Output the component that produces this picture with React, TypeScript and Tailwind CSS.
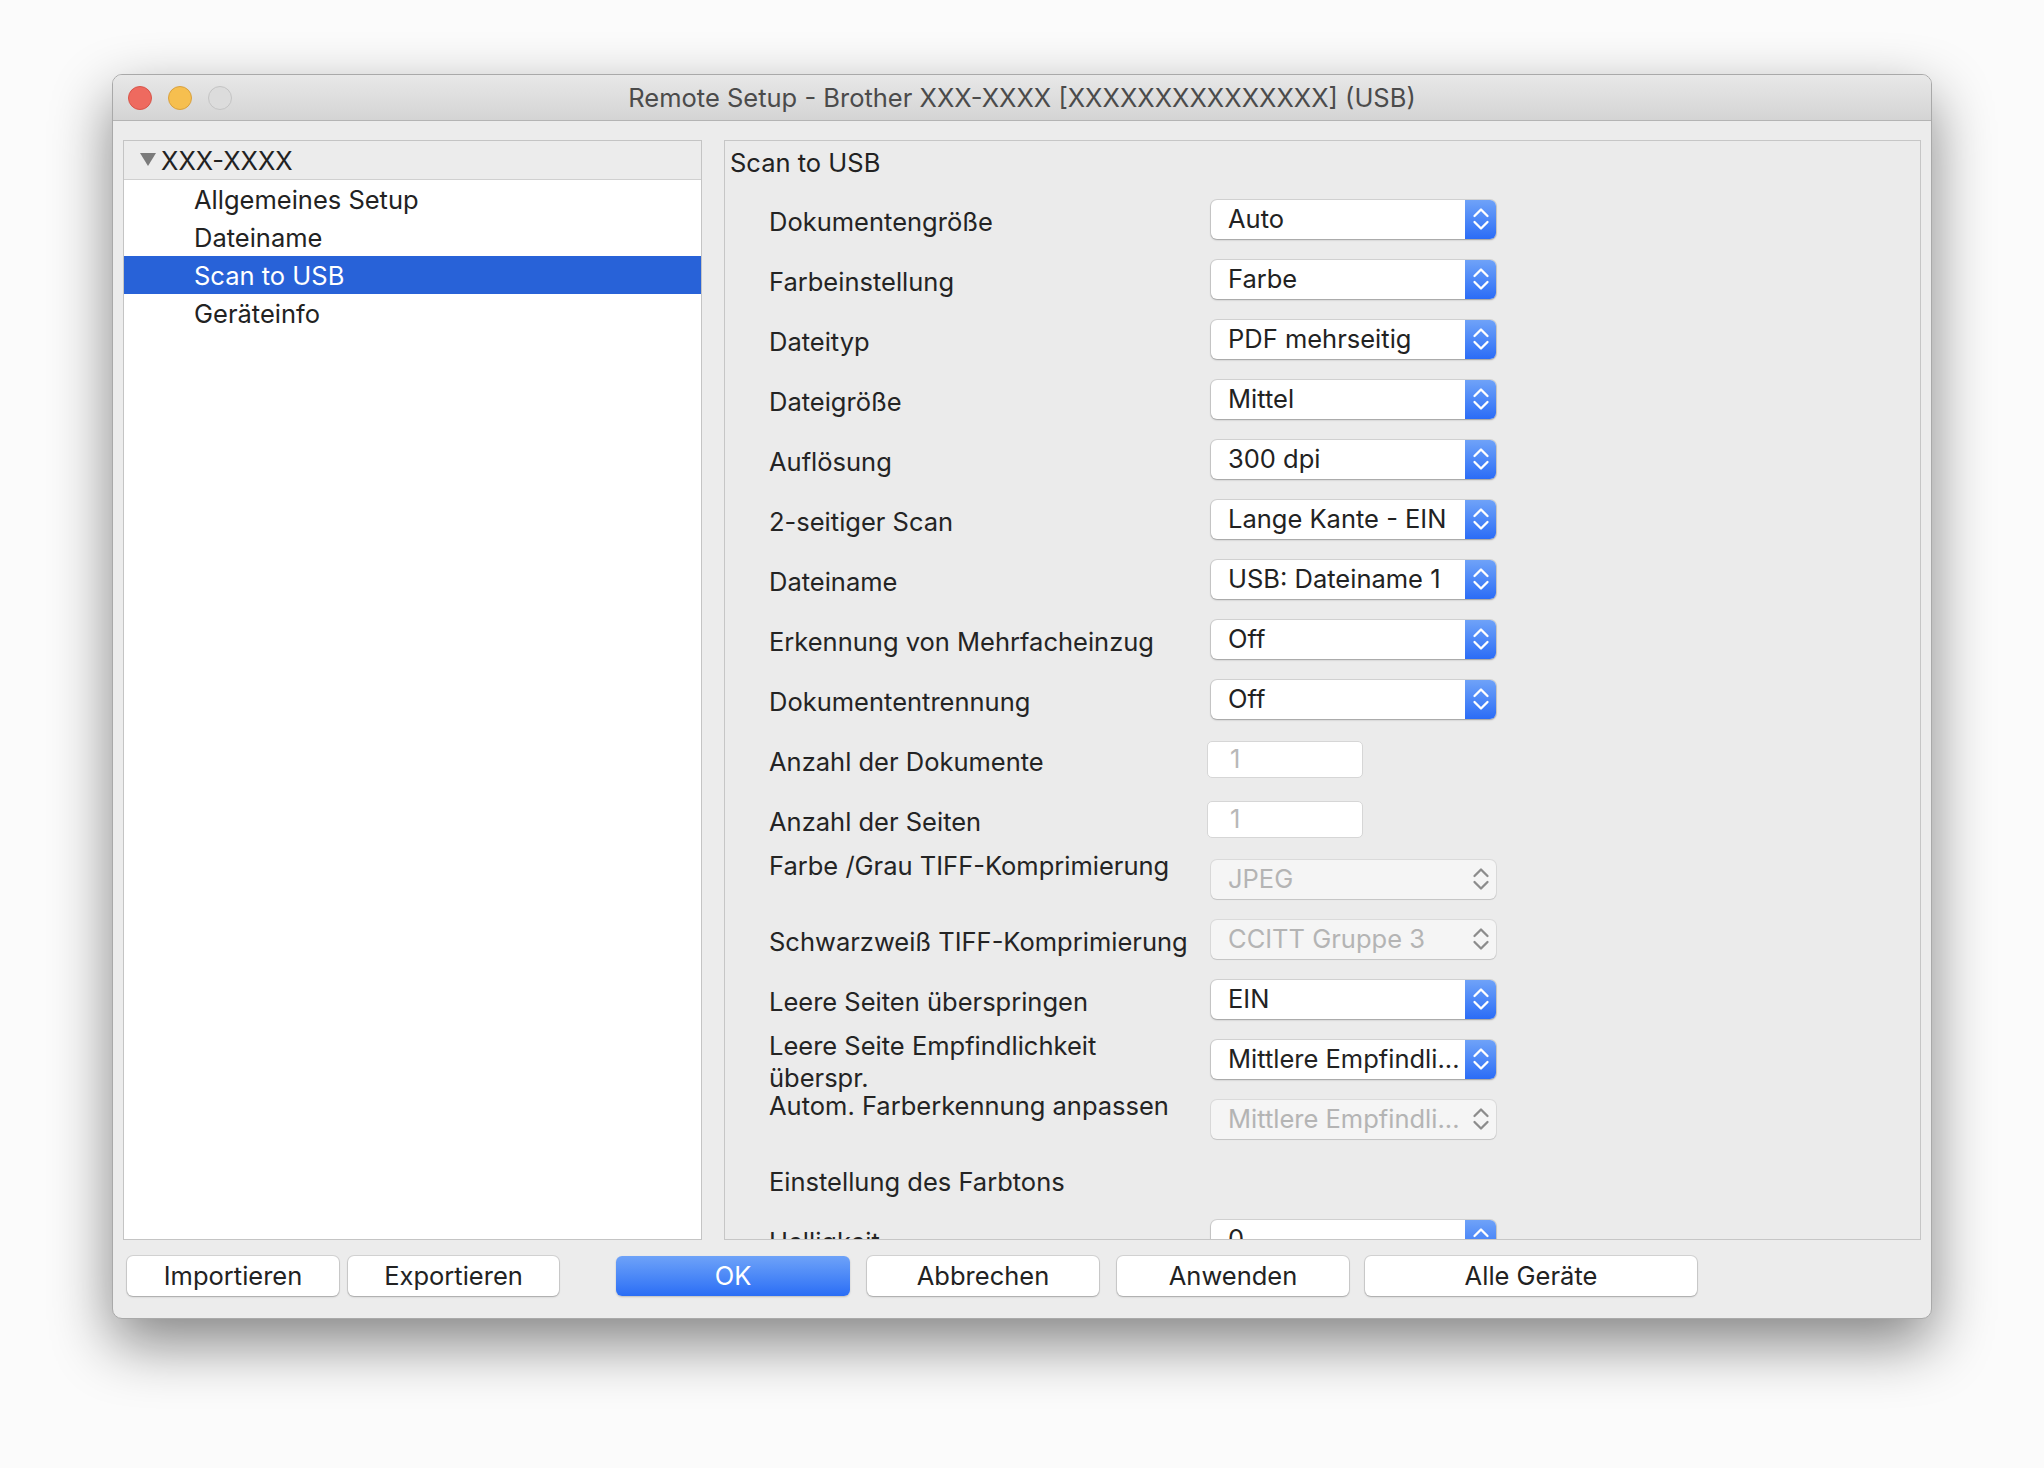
import React from "react";

const font = { fontFamily: "Inter, 'Noto Sans', 'Liberation Sans', sans-serif" };

function Chevrons({ color }: { color: string }) {
  return (
    <svg width="18" height="26" viewBox="0 0 18 26" fill="none">
      <path d="M2.5 10 L9 3.5 L15.5 10" stroke={color} strokeWidth="2.3" strokeLinecap="round" strokeLinejoin="round" />
      <path d="M2.5 16 L9 22.5 L15.5 16" stroke={color} strokeWidth="2.3" strokeLinecap="round" strokeLinejoin="round" />
    </svg>
  );
}

function Select({ value, disabled }: { value: string; disabled?: boolean }) {
  if (disabled) {
    return (
      <div className="flex h-[39px] w-[285px] shrink-0 items-stretch rounded-[6px] bg-[#f5f5f5] text-[#b4b4b4] shadow-[0_0_0_1px_rgba(0,0,0,0.07),0_1px_1px_rgba(0,0,0,0.1)]">
        <span className="flex flex-1 items-center whitespace-nowrap pl-[17px] text-[25.5px]">{value}</span>
        <span className="flex w-[31px] items-center justify-center">
          <Chevrons color="#8c8c8c" />
        </span>
      </div>
    );
  }
  return (
    <div className="flex h-[39px] w-[285px] shrink-0 items-stretch rounded-[6px] bg-white text-[#222] shadow-[0_0_0_1px_rgba(0,0,0,0.1),0_1px_2px_rgba(0,0,0,0.25)]">
      <span className="flex flex-1 items-center whitespace-nowrap pl-[17px] text-[25.5px]">{value}</span>
      <span className="flex w-[31px] items-center justify-center rounded-r-[6px] bg-gradient-to-b from-[#6fa2f8] to-[#2b6cf6]">
        <Chevrons color="#ffffff" />
      </span>
    </div>
  );
}

function TextInput({ value }: { value: string }) {
  return (
    <div className="ml-[-4px] flex h-[37px] w-[156px] shrink-0 items-center rounded-[5px] border border-[#d6d6d6] bg-white pl-[22px] text-[25.5px] text-[#b8b8b8]">
      {value}
    </div>
  );
}

type Row = {
  label: React.ReactNode;
  kind: "select" | "disabled" | "input";
  value: string;
  top?: boolean;
};

const rows: Row[] = [
  { label: "Dokumentengröße", kind: "select", value: "Auto" },
  { label: "Farbeinstellung", kind: "select", value: "Farbe" },
  { label: "Dateityp", kind: "select", value: "PDF mehrseitig" },
  { label: "Dateigröße", kind: "select", value: "Mittel" },
  { label: "Auflösung", kind: "select", value: "300 dpi" },
  { label: "2-seitiger Scan", kind: "select", value: "Lange Kante - EIN" },
  { label: "Dateiname", kind: "select", value: "USB: Dateiname 1" },
  { label: "Erkennung von Mehrfacheinzug", kind: "select", value: "Off" },
  { label: "Dokumententrennung", kind: "select", value: "Off" },
  { label: "Anzahl der Dokumente", kind: "input", value: "1" },
  { label: "Anzahl der Seiten", kind: "input", value: "1" },
  { label: "Farbe /Grau TIFF-Komprimierung", kind: "disabled", value: "JPEG", top: true },
  { label: "Schwarzweiß TIFF-Komprimierung", kind: "disabled", value: "CCITT Gruppe 3" },
  { label: "Leere Seiten überspringen", kind: "select", value: "EIN" },
  {
    label: (
      <>
        Leere Seite Empfindlichkeit
        <br />
        überspr.
      </>
    ),
    kind: "select",
    value: "Mittlere Empfindli...",
    top: true,
  },
  { label: "Autom. Farberkennung anpassen", kind: "disabled", value: "Mittlere Empfindli...", top: true },
];

const treeItems = ["Allgemeines Setup", "Dateiname", "Scan to USB", "Geräteinfo"];

function Button({ label, className }: { label: string; className: string }) {
  return (
    <div
      className={`flex h-[40px] items-center justify-center rounded-[6px] bg-white text-[25.5px] text-[#222] shadow-[0_0_0_1px_rgba(0,0,0,0.1),0_1px_2px_rgba(0,0,0,0.22)] ${className}`}
    >
      {label}
    </div>
  );
}

export default function App() {
  return (
    <div className="min-h-[1468px] w-[2044px] bg-[#fbfbfb] pl-[112px] pt-[74px]" style={font}>
      <div className="flex h-[1245px] w-[1820px] flex-col overflow-hidden rounded-[10px] border border-[#a9a9a9] bg-[#ececec] shadow-[0_24px_60px_rgba(0,0,0,0.48)]">
        {/* title bar */}
        <div className="relative flex h-[46px] shrink-0 items-center border-b border-[#b4b4b4] bg-gradient-to-b from-[#e8e8e8] to-[#d4d4d4]">
          <div className="flex items-center gap-[16px] pl-[15px]">
            <span className="h-[24px] w-[24px] rounded-full border border-[#d8554a] bg-[#ee6a5f]" />
            <span className="h-[24px] w-[24px] rounded-full border border-[#d9a13f] bg-[#f6bf4f]" />
            <span className="h-[24px] w-[24px] rounded-full border border-[#c4c4c4] bg-[#dcdcdc]" />
          </div>
          <div className="absolute inset-0 flex items-center justify-center pt-[2px] text-[25.5px] text-[#4b4b4b]">
            Remote Setup - Brother XXX-XXXX [XXXXXXXXXXXXXXX] (USB)
          </div>
        </div>

        {/* body */}
        <div className="flex flex-1 flex-col px-[10px] pt-[19px]">
          <div className="flex h-[1100px] gap-[22px]">
            {/* tree */}
            <div className="flex w-[579px] shrink-0 flex-col border border-[#c4c4c4] bg-white">
              <div className="flex h-[39px] shrink-0 items-center border-b border-[#d0d0d0] bg-[#ececec] pl-[16px] pt-[3px] text-[25.5px] text-[#222]">
                <svg width="16" height="14" viewBox="0 0 16 14" className="mb-[3px] mr-[5px]">
                  <path d="M0 0 H16 L8 13 Z" fill="#7b7b7b" />
                </svg>
                XXX-XXXX
              </div>
              {treeItems.map((t) => (
                <div
                  key={t}
                  className={
                    t === "Scan to USB"
                      ? "flex h-[38px] items-center bg-[#2862d8] pl-[70px] pt-[2px] text-[25.5px] text-white"
                      : "flex h-[38px] items-center pl-[70px] pt-[2px] text-[25.5px] text-[#222]"
                  }
                >
                  {t}
                </div>
              ))}
            </div>

            {/* settings */}
            <div className="flex flex-1 flex-col overflow-hidden border border-[#c6c6c6] bg-[#ebebeb]">
              <div className="h-[48px] shrink-0 pl-[5px] pt-[6px] text-[25.5px] leading-[32px] text-[#222]">Scan to USB</div>
              <div className="flex flex-col pl-[44px]">
                {rows.map((r, i) => (
                  <div key={i} className={r.top ? "flex h-[60px] shrink-0 items-start" : "flex h-[60px] shrink-0 items-center"}>
                    <div
                      className={
                        r.top
                          ? "w-[442px] shrink-0 pt-[1px] text-[25.5px] leading-[32px] text-[#242424]"
                          : "w-[442px] shrink-0 pt-[6px] text-[25.5px] leading-[32px] text-[#242424]"
                      }
                    >
                      {r.label}
                    </div>
                    <div className="self-center">
                      {r.kind === "input" ? (
                        <TextInput value={r.value} />
                      ) : (
                        <Select value={r.value} disabled={r.kind === "disabled"} />
                      )}
                    </div>
                  </div>
                ))}
                <div className="flex h-[60px] shrink-0 items-center">
                  <div className="w-[442px] pt-[6px] text-[25.5px] leading-[32px] text-[#242424]">Einstellung des Farbtons</div>
                </div>
                <div className="flex h-[60px] shrink-0 items-center">
                  <div className="w-[442px] shrink-0 pt-[6px] text-[25.5px] leading-[32px] text-[#242424]">Helligkeit</div>
                  <Select value="0" />
                </div>
              </div>
            </div>
          </div>

          {/* buttons */}
          <div className="mt-[16px] flex pl-[4px]">
            <Button label="Importieren" className="w-[212px]" />
            <Button label="Exportieren" className="ml-[9px] w-[211px]" />
            <div className="ml-[57px] flex h-[40px] w-[234px] items-center justify-center rounded-[6px] bg-gradient-to-b from-[#6ea2f8] to-[#2a6df5] text-[25.5px] text-white shadow-[0_1px_2px_rgba(0,0,0,0.2)]">
              OK
            </div>
            <Button label="Abbrechen" className="ml-[17px] w-[232px]" />
            <Button label="Anwenden" className="ml-[18px] w-[232px]" />
            <Button label="Alle Geräte" className="ml-[16px] w-[332px]" />
          </div>
        </div>
      </div>
    </div>
  );
}
